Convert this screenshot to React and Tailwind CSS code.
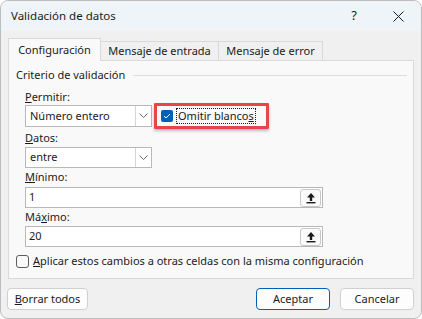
import { useState } from 'react';

const FONT = { fontFamily: '"Noto Sans", "Open Sans", sans-serif' };

function Chevron() {
  return (
    <svg width="9" height="6" viewBox="0 0 9 6" fill="none">
      <path d="M0.5 0.5 L4.5 4.5 L8.5 0.5" stroke="#6b6b6b" strokeWidth="1" />
    </svg>
  );
}

function UpArrow() {
  return (
    <svg width="10" height="12" viewBox="0 0 10 12">
      <path d="M5 1 L9 5.5 L6.2 5.5 L6.2 9 L3.8 9 L3.8 5.5 L1 5.5 Z" fill="#1a1a1a" />
      <rect x="0.5" y="10" width="9" height="1.4" fill="#1a1a1a" />
    </svg>
  );
}

function Select({ value, h }) {
  return (
    <div className={`flex w-[127px] border border-[#b8b8b8] bg-white ${h}`}>
      <div className="flex flex-1 items-center pl-[4px] text-[11px] text-[#1b1b1b]">{value}</div>
      <div className="flex w-[16px] items-center justify-center border-l border-[#d4d4d4]">
        <Chevron />
      </div>
    </div>
  );
}

function RefInput({ value }) {
  return (
    <div className="flex h-[21px] w-[298px] items-center border border-[#b8b8b8] bg-white pr-[1px]">
      <div className="flex-1 pl-[3px] text-[11px] text-[#1b1b1b]">{value}</div>
      <button className="flex h-[18px] w-[21px] items-center justify-center rounded-[3px] border border-[#c8c8c8] bg-[#fbfbfb]">
        <UpArrow />
      </button>
    </div>
  );
}

function Label({ children }) {
  return <div className="h-[16px] text-[11px] leading-[16px] text-[#1b1b1b]">{children}</div>;
}

export default function App() {
  const [skipBlanks, setSkipBlanks] = useState(true);
  const [applyAll, setApplyAll] = useState(false);

  return (
    <div
      className="flex h-[319px] w-[422px] flex-col overflow-hidden rounded-[8px] border border-[#bdbdbd] bg-[#f0f0f0]"
      style={FONT}
    >
      {/* Title bar */}
      <div className="flex h-[30px] items-center bg-[#eff4f9] pl-[10px] pr-[17px]">
        <span className="flex-1 text-[11.5px] text-[#1b1b1b]">Validación de datos</span>
        <span className="mr-[36px] text-[13px] text-[#1b1b1b]">?</span>
        <svg width="11" height="11" viewBox="0 0 11 11">
          <path d="M0.5 0.5 L10.5 10.5 M10.5 0.5 L0.5 10.5" stroke="#1b1b1b" strokeWidth="1" />
        </svg>
      </div>

      {/* Tabs */}
      <div className="ml-[7px] mt-[7px] flex h-[22px] items-end">
        <div className="relative z-10 -mb-px flex h-[23px] w-[93px] items-center justify-center border-x border-t border-[#d9d9d9] bg-[#f9f9f9] text-[11px] text-[#1b1b1b]">
          Configuración
        </div>
        <div className="flex h-[19px] w-[118px] items-center justify-center border-r border-t border-[#d9d9d9] bg-[#f0f0f0] text-[11px] text-[#1b1b1b]">
          Mensaje de entrada
        </div>
        <div className="flex h-[19px] w-[104px] items-center justify-center border-r border-t border-[#d9d9d9] bg-[#f0f0f0] text-[11px] text-[#1b1b1b]">
          Mensaje de error
        </div>
      </div>

      {/* Panel */}
      <div className="mx-[7px] flex h-[219px] flex-col border border-[#d9d9d9] bg-[#f9f9f9]">
        <div className="mt-[6px] flex h-[16px] items-center pl-[7px] pr-[6px]">
          <span className="text-[11px] text-[#1b1b1b]">Criterio de validación</span>
          <div className="ml-[8px] h-px flex-1 bg-[#dcdcdc]" />
        </div>

        <div className="flex flex-col pl-[16px]">
          <div className="mt-[6px]">
            <Label>
              <span className="underline">P</span>ermitir:
            </Label>
          </div>
          <div className="flex h-[22px] items-center">
            <Select value="Número entero" h="h-[22px]" />
            <div className="-my-[3px] ml-[2px] flex h-[26px] w-[115px] shrink-0 items-center rounded-[1px] border-[3px] border-[#e8444c] pl-[4px] shadow-[0_2px_3px_rgba(0,0,0,0.25)]">
              <button
                onClick={() => setSkipBlanks(!skipBlanks)}
                className={`flex h-[12px] w-[12px] items-center justify-center rounded-[2px] ${
                  skipBlanks ? 'bg-[#005fb8]' : 'border border-[#8a8a8a] bg-white'
                }`}
              >
                {skipBlanks && (
                  <svg width="8" height="6" viewBox="0 0 8 6">
                    <path d="M1 3 L3 5 L7 1" stroke="white" strokeWidth="1" fill="none" />
                  </svg>
                )}
              </button>
              <span className="ml-[3px] border border-dotted border-[#1b1b1b] px-px text-[11px] leading-[14px] text-[#1b1b1b]">
                Omitir blanco<span className="underline">s</span>
              </span>
            </div>
          </div>

          <div className="mt-[3px]">
            <Label>
              <span className="underline">D</span>atos:
            </Label>
          </div>
          <div className="mt-[1px]">
            <Select value="entre" h="h-[21px]" />
          </div>

          <div className="mt-[1px]">
            <Label>
              <span className="underline">M</span>ínimo:
            </Label>
          </div>
          <div className="mt-[2px]">
            <RefInput value="1" />
          </div>

          <div className="mt-[1px]">
            <Label>
              Má<span className="underline">x</span>imo:
            </Label>
          </div>
          <div className="mt-[1px]">
            <RefInput value="20" />
          </div>
        </div>

        <div className="mt-[7px] flex h-[14px] items-center pl-[7px]">
          <button
            onClick={() => setApplyAll(!applyAll)}
            className="h-[13px] w-[13px] rounded-[3px] border border-[#5c5c5c] bg-[#f9f9f9]"
          />
          <span className="ml-[4px] text-[11px] text-[#1b1b1b]">
            <span className="underline">A</span>plicar estos cambios a otras celdas con la misma configuración
          </span>
        </div>
      </div>

      {/* Buttons */}
      <div className="mt-[9px] flex items-center pl-[6px] pr-[7px]">
        <button className="h-[22px] w-[81px] rounded-[4px] border border-[#d0d0d0] bg-[#fdfdfd] text-[11px] text-[#1b1b1b]">
          <span className="underline">B</span>orrar todos
        </button>
        <div className="flex-1" />
        <button className="h-[22px] w-[74px] rounded-[4px] border border-[#005fb8] bg-[#fdfdfd] text-[11px] text-[#1b1b1b]">
          Aceptar
        </button>
        <button className="ml-[10px] h-[22px] w-[74px] rounded-[4px] border border-[#d0d0d0] bg-[#fdfdfd] text-[11px] text-[#1b1b1b]">
          Cancelar
        </button>
      </div>
    </div>
  );
}
